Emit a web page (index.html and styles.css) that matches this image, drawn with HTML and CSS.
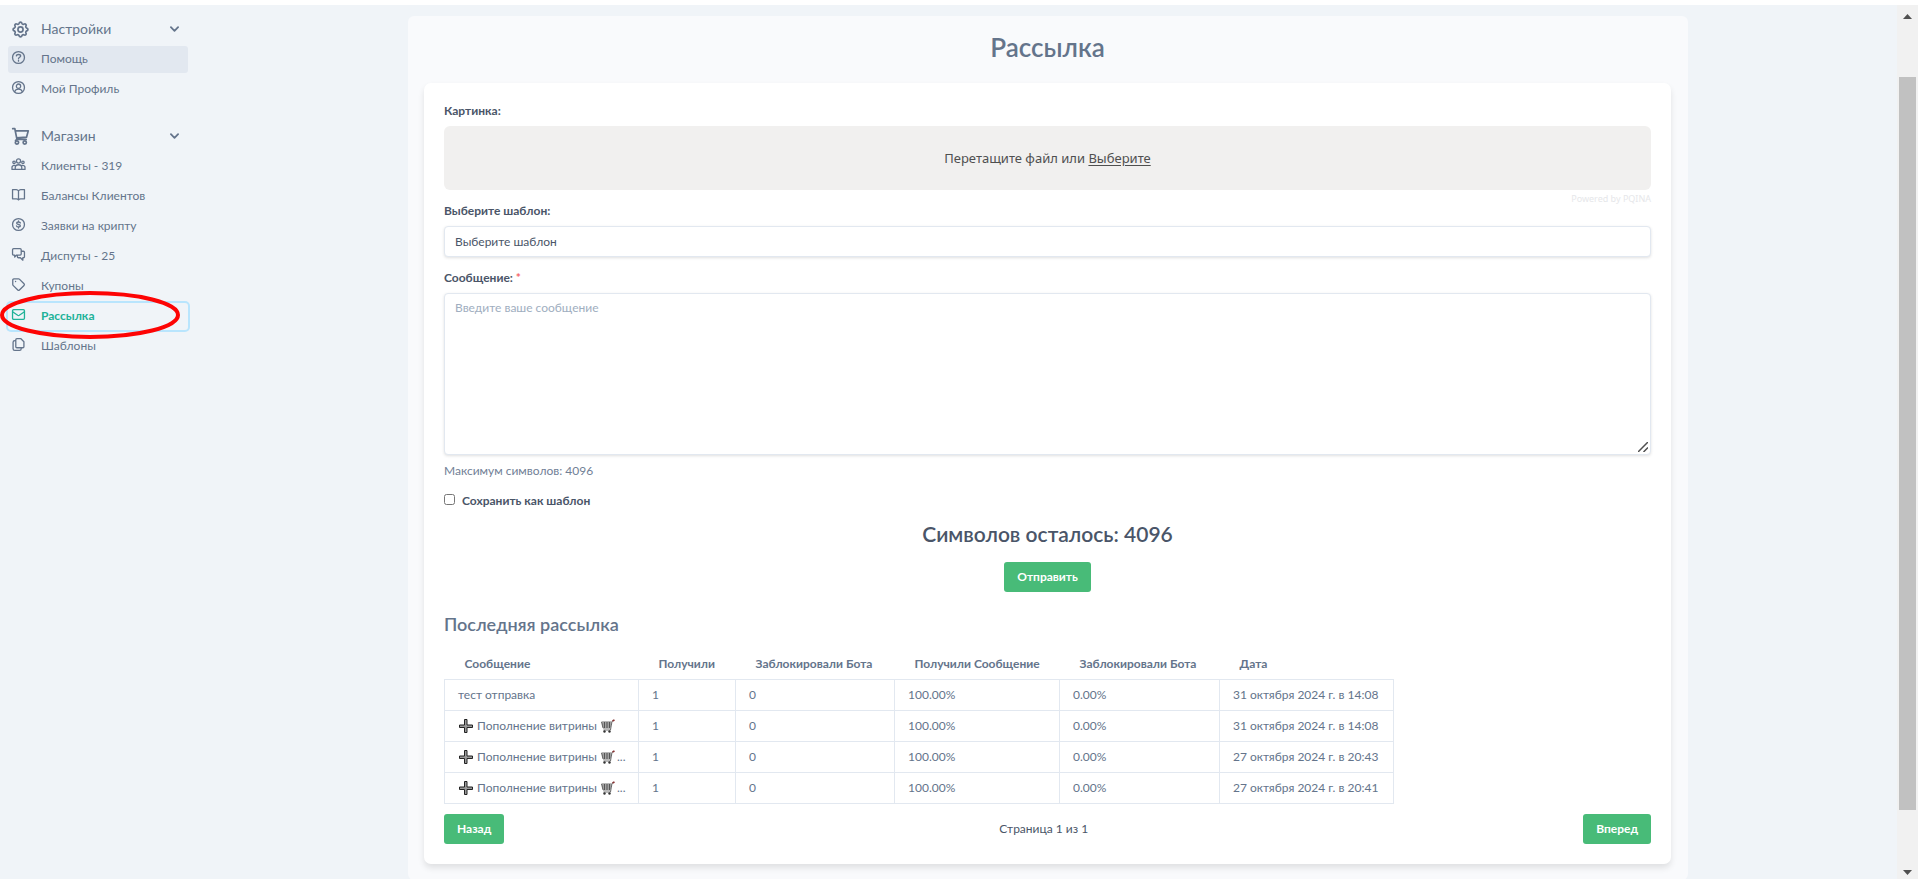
FILE: index.html
```html
<!DOCTYPE html>
<html lang="ru">
<head>
<meta charset="utf-8">
<title>Рассылка</title>
<link rel="stylesheet" href="styles.css">
</head>
<body>
<div class="app">
  <aside class="sidebar">
    <nav class="group">
      <button class="group-head" type="button">
        <svg class="icon-lg" viewBox="0 0 24 24"><path d="M10 3.2c.6-2.1 3.4-2.1 4 0a2.1 2.1 0 0 0 3 1.2c1.900-1.100 3.900.9 2.700 2.700a2.100 2.100 0 0 0 1.200 3c2.100.5 2.100 3.300 0 3.800a2.100 2.100 0 0 0-1.200 3c1.200 1.900-.8 3.900-2.700 2.700a2.100 2.100 0 0 0-3 1.200c-.5 2.100-3.500 2.100-4 0a2.100 2.100 0 0 0-3-1.200c-1.900 1.200-3.900-.8-2.700-2.700a2.100 2.100 0 0 0-1.200-3c-2.100-.5-2.100-3.300 0-3.800a2.100 2.100 0 0 0 1.200-3C3.100 5.300 5.100 3.300 7 4.400a2.100 2.100 0 0 0 3-1.200z"/><circle cx="12" cy="12" r="3.600"/></svg>
        <span class="grow">Настройки</span>
        <svg class="chevron" viewBox="0 0 10 6"><path d="M1 1l4 4 4-4"/></svg>
      </button>
      <a class="item hovered" href="#"><svg class="icon" viewBox="0 0 24 24"><circle cx="12" cy="12" r="11"/><path d="M8 9c.4-3.400 8-3.400 8 .3 0 2.200-4 2.600-4 5M12 17.200v1.600"/></svg>Помощь</a>
      <a class="item" href="#"><svg class="icon" viewBox="0 0 24 24"><circle cx="12" cy="12" r="11"/><circle cx="12" cy="9.500" r="4"/><path d="M5 19.500c1-3.500 3.500-4.500 7-4.500s6 1 7 4.500"/></svg>Мой Профиль</a>
    </nav>
    <nav class="group">
      <button class="group-head" type="button">
        <svg class="icon-lg" viewBox="0 0 24 24"><path d="M1 1h3l3 15h13M4.700 4H23l-2.500 9L6.500 14M7 16l-2 1.500"/><circle cx="7" cy="20.500" r="2.300"/><circle cx="18" cy="20.500" r="2.300"/></svg>
        <span class="grow">Магазин</span>
        <svg class="chevron" viewBox="0 0 10 6"><path d="M1 1l4 4 4-4"/></svg>
      </button>
      <a class="item" href="#"><svg class="icon" viewBox="0 0 24 24"><circle cx="12" cy="5.500" r="3.800"/><circle cx="3.800" cy="8" r="2.200"/><circle cx="20.200" cy="8" r="2.200"/><path d="M6 21v-4c0-3 2.500-4.500 6-4.500s6 1.500 6 4.500v4zM6 21H0v-4c0-2 1.500-3.500 5-3.500M18 21h6v-4c0-2-1.500-3.500-5-3.500"/></svg>Клиенты - 319</a>
      <a class="item" href="#"><svg class="icon" viewBox="0 0 24 24"><path d="M12 5.500C11 4 10 3 8 3H1v17h7c2 0 3 .5 4 2 1-1.500 2-2 4-2h7V3h-7c-2 0-3 1-4 2.500zM12 5.500V21"/></svg>Балансы Клиентов</a>
      <a class="item" href="#"><svg class="icon" viewBox="0 0 24 24"><circle cx="12" cy="12" r="11"/><path d="M15.500 9.200C15 7 8.700 6.500 8.500 9.500c-.2 3 7.200 2 7 5-.2 2.800-6.700 2.500-7.200 0M12 5.500v1.500M12 17v1.500"/></svg>Заявки на крипту</a>
      <a class="item" href="#"><svg class="icon" viewBox="0 0 24 24"><path d="M3 1h12a2 2 0 0 1 2 2v8a2 2 0 0 1-2 2H8.500L5 16.500V13H3a2 2 0 0 1-2-2V3a2 2 0 0 1 2-2zM17 6h4a2 2 0 0 1 2 2v8a2 2 0 0 1-2 2h-1v4.500L15.500 18H12a2 2 0 0 1-2-2v-3"/></svg>Диспуты - 25</a>
      <a class="item" href="#"><svg class="icon" viewBox="0 0 24 24"><path d="M3.500 1.500h8.700c.6 0 1 .2 1.400.6l8.600 8.600c1 1 1 2 0 3l-8.500 8.500c-1 1-2 1-3 0L2 13.600c-.4-.4-.6-.9-.6-1.400V3.500c0-1.200.8-2 2-2zM6.500 6.500h.2"/></svg>Купоны</a>
      <a class="item active" href="#"><svg class="icon" viewBox="0 0 24 24"><rect x="1" y="3" width="22" height="18" rx="2"/><path d="M1 7l9.500 6.500c1 .6 2 .6 3 0L23 7"/></svg>Рассылка</a>
      <a class="item" href="#"><svg class="icon" viewBox="0 0 24 24"><path d="M9 1h7l6 6v9a2 2 0 0 1-2 2H9a2 2 0 0 1-2-2V3a2 2 0 0 1 2-2zM7 5H5a3 3 0 0 0-3 3v12a3 3 0 0 0 3 3h9a3 3 0 0 0 3-3v-2"/></svg>Шаблоны</a>
    </nav>
    <svg class="marker" viewBox="0 0 181 50"><ellipse cx="90" cy="25" rx="88" ry="22"/></svg>
  </aside>

  <main class="content">
    <section class="panel">
      <h1 class="title">Рассылка</h1>
      <div class="card">
        <form class="form">
          <label class="label" for="file">Картинка:</label>
          <label class="drop">
            <input class="file" id="file" type="file">
            <span>Перетащите файл или <span class="browse">Выберите</span></span>
          </label>
          <a class="credit" href="#">Powered by PQINA</a>
          <label class="label label-template" for="template">Выберите шаблон:</label>
          <select class="field select" id="template"><option>Выберите шаблон</option></select>
          <label class="label label-message" for="message">Сообщение: <span class="req">*</span></label>
          <div class="area-wrap">
            <textarea class="field area" id="message" placeholder="Введите ваше сообщение"></textarea>
            <svg class="grip" viewBox="0 0 10 10"><path d="M0 10L10 0M5.500 10L10 5.500"/></svg>
          </div>
          <p class="hint">Максимум символов: 4096</p>
          <div class="check">
            <input class="box" id="save" type="checkbox">
            <label class="check-label" for="save">Сохранить как шаблон</label>
          </div>
          <h2 class="counter">Символов осталось: 4096</h2>
          <button class="btn send" type="button">Отправить</button>
        </form>

        <h3 class="subtitle">Последняя рассылка</h3>
        <table class="table">
          <colgroup><col class="c-msg"><col class="c-got"><col class="c-blk"><col class="c-rate"><col class="c-blk-rate"><col class="c-date"></colgroup>
          <thead>
            <tr><th>Сообщение</th><th>Получили</th><th>Заблокировали Бота</th><th>Получили Сообщение</th><th>Заблокировали Бота</th><th>Дата</th></tr>
          </thead>
          <tbody>
            <tr><td>тест отправка</td><td>1</td><td>0</td><td>100.00%</td><td>0.00%</td><td>31 октября 2024 г. в 14:08</td></tr>
            <tr><td><div class="msg"><svg class="emoji" viewBox="0 0 14 14"><use href="#plus"/></svg><span>Пополнение витрины</span><svg class="emoji" viewBox="0 0 14 14"><use href="#trolley"/></svg></div></td><td>1</td><td>0</td><td>100.00%</td><td>0.00%</td><td>31 октября 2024 г. в 14:08</td></tr>
            <tr><td><div class="msg"><svg class="emoji" viewBox="0 0 14 14"><use href="#plus"/></svg><span>Пополнение витрины</span><svg class="emoji" viewBox="0 0 14 14"><use href="#trolley"/></svg><span class="dots">...</span></div></td><td>1</td><td>0</td><td>100.00%</td><td>0.00%</td><td>27 октября 2024 г. в 20:43</td></tr>
            <tr><td><div class="msg"><svg class="emoji" viewBox="0 0 14 14"><use href="#plus"/></svg><span>Пополнение витрины</span><svg class="emoji" viewBox="0 0 14 14"><use href="#trolley"/></svg><span class="dots">...</span></div></td><td>1</td><td>0</td><td>100.00%</td><td>0.00%</td><td>27 октября 2024 г. в 20:41</td></tr>
          </tbody>
        </table>
        <div class="pager">
          <button class="btn" type="button">Назад</button>
          <span>Страница 1 из 1</span>
          <button class="btn" type="button">Вперед</button>
        </div>
      </div>
    </section>
  </main>

  <div class="scrollbar">
    <svg class="arrow" viewBox="0 0 9 5"><path d="M0 5l4.500-5L9 5z"/></svg>
    <div class="track"><div class="thumb"></div></div>
    <svg class="arrow" viewBox="0 0 9 5"><path d="M0 0h9L4.500 5z"/></svg>
  </div>
</div>

<svg class="defs">
  <symbol id="plus" viewBox="0 0 14 14"><path d="M5.500.5h2.500v5.500h5.500v2.500H8v5H5.500v-5H.5V6h5z" fill="#999" stroke="#222"/></symbol>
  <symbol id="trolley" viewBox="0 0 14 14"><path d="M.5 3h10l-1 6H2z" fill="#ddd"/><path d="M.5 3h10M1 5h9.500M1.500 7h8.500M2 9h7.500M.5 3L2 9M3.500 3v6M6 3v6M8.500 3v6M13 1l-2 1.500-1.500 8.500H2.500" fill="none" stroke="#333" stroke-width=".7"/><circle cx="3.500" cy="12.500" r="1.200" fill="#333"/><circle cx="8.500" cy="12.500" r="1.200" fill="#333"/><path d="M11.500 2L13.500 1" stroke="#833" stroke-width="1.600"/></symbol>
</svg>
</body>
</html>
```
FILE: styles.css
```css
* {
  box-sizing: border-box;
}

body {
  margin: 0;
  padding-top: 5px;
  height: 100vh;
  overflow: hidden;
  background: #fff;
  color: #4a5568;
  font: 12px/18px Lato, "Open Sans", sans-serif;
}

h1, h2, h3, p {
  margin: 0;
}

button, select, textarea {
  font: inherit;
  color: inherit;
}

.app {
  display: flex;
  height: 100%;
  background: #f0f4f8;
}

/* Sidebar */
.sidebar {
  position: relative;
  flex: none;
  width: 199px;
  padding: 8px 11px 0 8px;
  color: #64748b;
}

.group {
  display: flex;
  flex-direction: column;
  gap: 3px;
  margin-bottom: 17px;
}

.group-head {
  display: flex;
  align-items: center;
  height: 33px;
  margin-bottom: -3px;
  padding: 0 9px 1px 4px;
  border: 0;
  background: none;
  font-size: 14px;
  text-align: left;
}

.grow {
  flex: 1;
}

.icon-lg, .icon, .chevron {
  flex: none;
  overflow: visible;
  fill: none;
  stroke: currentColor;
  stroke-width: 2.4;
  stroke-linecap: round;
  stroke-linejoin: round;
}

.icon-lg {
  width: 17px;
  height: 17px;
  margin-right: 12px;
}

.icon {
  width: 13px;
  height: 13px;
  margin: 0 16px 3px 0;
}

.chevron {
  width: 9px;
  height: 6px;
  stroke-width: 2;
}

.item {
  display: flex;
  align-items: center;
  height: 27px;
  padding: 0 0 2px 4px;
  border-radius: 3px;
  color: inherit;
  text-decoration: none;
}

.hovered {
  background: #e2e8f0;
}

.active {
  color: #21b298;
  font-weight: 700;
  box-shadow: 0 0 0 2px #b9e5fd;
}

.marker {
  position: absolute;
  left: 0;
  top: 285px;
  width: 181px;
  height: 50px;
  fill: none;
  stroke: #fd0404;
  stroke-width: 4;
  pointer-events: none;
}

/* Main area */
.content {
  flex: 1;
  min-width: 0;
  padding-top: 11px;
}

.panel {
  max-width: 1280px;
  margin: 0 auto;
  padding: 15px 17px 16px 16px;
  border-radius: 6px;
  background: #f9fafc;
}

.title {
  margin-bottom: 20px;
  color: #64748b;
  font-size: 26px;
  line-height: 32px;
  font-weight: 600;
  text-align: center;
}

.card {
  padding: 19px 20px 20px;
  border-radius: 7px;
  background: #fff;
  box-shadow: 0 4px 6px rgba(0, 0, 0, .1);
}

.form {
  display: flex;
  flex-direction: column;
}

.label, .check-label {
  font-weight: 700;
}

.label {
  margin-bottom: 6px;
}

.drop {
  display: flex;
  align-items: center;
  justify-content: center;
  height: 64px;
  border-radius: 6px;
  background: #f1f0ef;
  color: #4f4f4f;
  font: 13px/20px "Noto Sans", sans-serif;
}

.file {
  position: absolute;
  width: 1px;
  height: 1px;
  opacity: 0;
}

.browse {
  text-decoration: underline;
  text-underline-offset: 2px;
}

.credit {
  align-self: flex-end;
  margin-top: 2px;
  color: #e6e7ea;
  font: 9px/14px "Noto Sans", sans-serif;
  text-decoration: none;
}

.label-template {
  margin-top: -4px;
}

.label-message {
  margin-top: 12px;
}

.req {
  color: #f56565;
}

.field {
  display: block;
  width: 100%;
  border: 1px solid #e2e8f0;
  border-radius: 4px;
  background: #fff;
  box-shadow: 0 1px 3px rgba(0, 0, 0, .12);
}

.select {
  height: 31px;
  padding: 0 10px;
  appearance: none;
}

.area-wrap {
  position: relative;
}

.area {
  height: 162px;
  padding: 5px 10px;
  resize: none;
}

.area::placeholder {
  color: #a0aec0;
}

.grip {
  position: absolute;
  right: 3px;
  bottom: 3px;
  width: 10px;
  height: 10px;
  fill: none;
  stroke: #505050;
  stroke-width: 1.5;
  pointer-events: none;
}

.hint {
  margin-top: 7px;
  color: #718096;
}

.check {
  display: flex;
  align-items: center;
  gap: 7px;
  margin-top: 12px;
}

.box {
  width: 11px;
  height: 11px;
  margin: 0 0 3px;
}

.counter {
  margin-top: 10px;
  font-size: 21px;
  line-height: 28px;
  font-weight: 600;
  text-align: center;
}

.btn {
  height: 30px;
  padding: 0 13px;
  border: 0;
  border-radius: 3px;
  background: #48bb78;
  color: #fff;
  font-weight: 700;
}

.send {
  align-self: center;
  margin-top: 14px;
}

.subtitle {
  margin: 20px 0 13px;
  color: #64748b;
  font-size: 18px;
  line-height: 24px;
  font-weight: 600;
}

/* Mailing history */
.table {
  table-layout: fixed;
  width: 949px;
  border-collapse: collapse;
  color: #64748b;
  white-space: nowrap;
}

.c-msg { width: 194px; }
.c-got { width: 97px; }
.c-blk { width: 159px; }
.c-rate { width: 165px; }
.c-blk-rate { width: 160px; }
.c-date { width: 174px; }

.table th {
  height: 30px;
  padding: 0 0 0 20px;
  font-weight: 700;
  text-align: left;
}

.table td {
  height: 31px;
  padding: 0 0 0 13px;
  border: 1px solid #e2e8f0;
}

.msg {
  display: flex;
  align-items: center;
  gap: 4px;
  padding-left: 1px;
}

.emoji {
  flex: none;
  width: 14px;
  height: 14px;
}

.dots {
  margin-left: -2px;
}

.pager {
  display: flex;
  align-items: center;
  justify-content: space-between;
  margin-top: 10px;
}

/* Page scrollbar */
.scrollbar {
  display: flex;
  flex: none;
  flex-direction: column;
  align-items: center;
  width: 21px;
  padding: 9px 0 4px;
  background: #f1f1f1;
}

.arrow {
  width: 9px;
  height: 5px;
  fill: #505050;
}

.track {
  flex: 1;
  padding: 58px 0 60px;
}

.thumb {
  width: 17px;
  height: 100%;
  background: #c1c1c1;
}

.defs {
  display: none;
}
```
